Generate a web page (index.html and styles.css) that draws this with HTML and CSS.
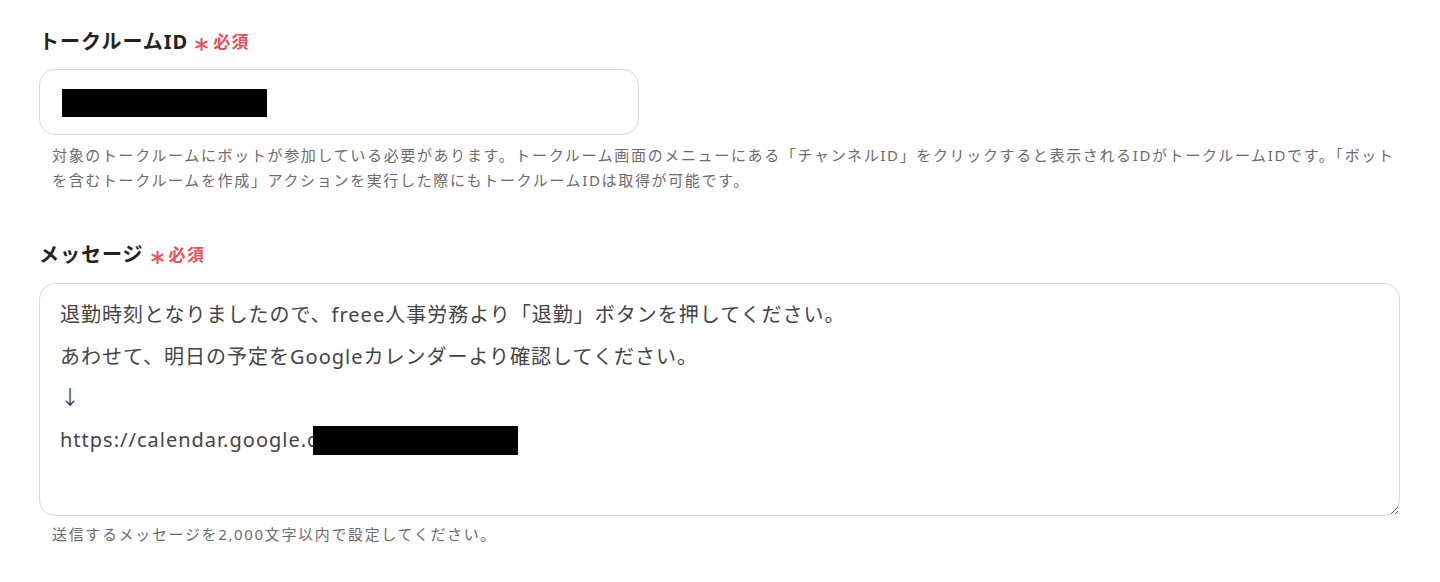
FILE: index.html
```html
<!DOCTYPE html>
<html lang="ja">
<head>
<meta charset="utf-8">
<title>フォーム</title>
<link rel="stylesheet" href="styles.css">
</head>
<body>
<main class="form">
  <section class="field">
    <div class="label">
      <span class="label-text">トークルームID</span>
      <span class="req">
        <svg class="ast" viewBox="0 0 12 12" aria-hidden="true"><path d="M6 0.6V11.4M1.3 3.3L10.7 8.7M1.3 8.7L10.7 3.3" stroke="currentColor" stroke-width="1.9" stroke-linecap="round" fill="none"/></svg>
        <span class="req-text">必須</span>
      </span>
    </div>
    <div class="input"><span class="redact redact-input"></span></div>
    <p class="help">対象のトークルームにボットが参加している必要があります。トークルーム画面のメニューにある「チャンネルID」をクリックすると表示されるIDがトークルームIDです。「ボット<br>を含むトークルームを作成」アクションを実行した際にもトークルームIDは取得が可能です。</p>
  </section>
  <section class="field field-message">
    <div class="label">
      <span class="label-text">メッセージ</span>
      <span class="req">
        <svg class="ast" viewBox="0 0 12 12" aria-hidden="true"><path d="M6 0.6V11.4M1.3 3.3L10.7 8.7M1.3 8.7L10.7 3.3" stroke="currentColor" stroke-width="1.9" stroke-linecap="round" fill="none"/></svg>
        <span class="req-text">必須</span>
      </span>
    </div>
    <div class="textarea">
      <p class="line">退勤時刻となりましたので、freee人事労務より「退勤」ボタンを押してください。</p>
      <p class="line">あわせて、明日の予定をGoogleカレンダーより確認してください。</p>
      <p class="line">↓</p>
      <p class="line">https://calendar.google.c<span class="redact redact-url"></span></p>
    </div>
    <p class="help help-tight">送信するメッセージを2,000文字以内で設定してください。</p>
  </section>
</main>
</body>
</html>
```

FILE: styles.css
```css
html, body {
  margin: 0;
  background: #ffffff;
}

body {
  font-family: "Noto Sans", "Noto Sans CJK JP", sans-serif;
}

.form {
  padding: 28px 0 0 39px;
  width: 1361px;
}

.label {
  display: flex;
  align-items: center;
  height: 28px;
  color: #222222;
}

.label-text {
  font-size: 20px;
  font-weight: 700;
  letter-spacing: 1px;
  line-height: 28px;
}

.req {
  display: flex;
  align-items: center;
  margin-left: 7px;
  color: #e8505b;
}

.ast {
  width: 13px;
  height: 13px;
  margin-top: 5px;
}

.req-text {
  font-size: 17px;
  font-weight: 700;
  letter-spacing: 1.3px;
  margin-left: 5px;
  line-height: 28px;
}

.input {
  margin-top: 13px;
  width: 600px;
  height: 66px;
  box-sizing: border-box;
  border: 1px solid #d6d9de;
  border-radius: 16px;
  padding-left: 22px;
  display: flex;
  align-items: center;
}

.redact {
  display: inline-block;
  background: #000;
}

.redact-input {
  width: 205px;
  height: 28px;
  margin-top: 2px;
}

.help {
  margin: 8px 0 0;
  padding-left: 13px;
  font-size: 15px;
  line-height: 25px;
  letter-spacing: 1.65px;
  color: #6b6b6b;
}

.field-message {
  margin-top: 48px;
}

.textarea {
  margin-top: 14px;
  height: 233px;
  box-sizing: border-box;
  border: 1px solid #d6d9de;
  border-radius: 16px;
  padding: 10px 20px;
  font-size: 20px;
  line-height: 41.7px;
  letter-spacing: 1px;
  color: #444444;
  resize: vertical;
  overflow: auto;
}

.line {
  margin: 0;
  white-space: nowrap;
}

.redact-url {
  width: 205px;
  height: 29px;
  margin-left: -5px;
  vertical-align: -8px;
}

.help-tight {
  margin-top: 6px;
}
```
